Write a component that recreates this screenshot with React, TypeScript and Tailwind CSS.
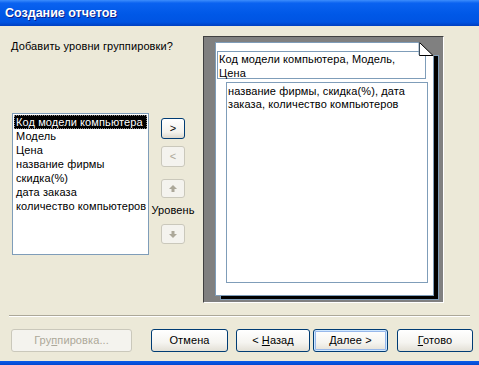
import React from 'react';

const font = "font-['Liberation_Sans',Arial,sans-serif]";

const fields = [
  'Код модели компьютера',
  'Модель',
  'Цена',
  'название фирмы',
  'скидка(%)',
  'дата заказа',
  'количество компьютеров',
];

// small square buttons next to the list
const SmallBtn = ({ disabled, children, h = 'h-[21px]' }: { disabled?: boolean; children: React.ReactNode; h?: string }) => (
  <div
    className={`w-[24px] ${h} flex items-center justify-center rounded-[3px] border text-[11px] ${
      disabled
        ? 'border-[#cac8bb] bg-[#f4f3ee] text-[#aca899]'
        : 'border-[#003c74] bg-[linear-gradient(180deg,#ffffff_0%,#f3f2ed_70%,#dcd8cd_100%)] text-black'
    }`}
  >
    {children}
  </div>
);

const Arrow = ({ down }: { down?: boolean }) => (
  <svg width="8" height="7" viewBox="0 0 8 7" className={down ? 'rotate-180' : ''}>
    <path d="M4 0 L8 4 L5.5 4 L5.5 7 L2.5 7 L2.5 4 L0 4 Z" fill="#aca899" />
  </svg>
);

// XP push buttons at the bottom
const Btn = ({
  w,
  disabled,
  def,
  children,
}: {
  w: string;
  disabled?: boolean;
  def?: boolean;
  children: React.ReactNode;
}) => (
  <div
    className={`${w} h-[23px] flex items-center justify-center rounded-[3px] border text-[11px] ${
      disabled
        ? 'border-[#cac8bb] bg-[#f4f3ee] text-[#aca899]'
        : 'border-[#003c74] bg-[linear-gradient(180deg,#ffffff_0%,#f5f4f0_60%,#e3e0d6_100%)] text-black'
    } ${def ? 'shadow-[inset_0_0_0_1px_#cee7ff,inset_0_0_0_2px_#98b8ea]' : ''}`}
  >
    {children}
  </div>
);

export default function App() {
  return (
    <div className={`w-[479px] h-[365px] bg-[#ece9d8] flex flex-col overflow-hidden tracking-[0.1px] ${font}`}>
      {/* title bar */}
      <div className="h-[26px] shrink-0 flex items-center pl-[5px] bg-[linear-gradient(180deg,#3d8dfc_0%,#0a62f0_12%,#0058e7_55%,#0054e2_85%,#003fc0_100%)]">
        <span className="text-white font-bold text-[12.5px] tracking-[0px] [text-shadow:1px_1px_0_#0a1e8a]">
          Создание отчетов
        </span>
      </div>

      <div className="h-[335px] shrink-0 flex flex-col">
        <div className="flex pt-[10px]">
          {/* left: label + list */}
          <div className="w-[148px] shrink-0 flex flex-col">
            <div className="pl-[11px] mt-[3px] leading-[14px] text-[11px] text-black whitespace-nowrap">
              Добавить уровни группировки?
            </div>
            <div className="ml-[12px] mt-[60px] w-[137px] h-[142px] border border-[#7f9db9] bg-white pt-[1px] px-[1px]">
              {fields.map((f, i) => (
                <div
                  key={f}
                  className={`h-[14px] leading-[14px] pl-[2px] text-[11px] whitespace-nowrap ${
                    i === 0 ? 'bg-black text-white outline outline-1 outline-dotted outline-offset-[-1px] outline-[#888]' : 'text-black'
                  }`}
                >
                  {f}
                </div>
              ))}
            </div>
          </div>

          {/* middle: move buttons */}
          <div className="w-[50px] shrink-0 flex flex-col items-center pt-[82px]">
            <SmallBtn>&gt;</SmallBtn>
            <div className="mt-[7px]">
              <SmallBtn disabled>&lt;</SmallBtn>
            </div>
            <div className="mt-[12px]">
              <SmallBtn disabled h="h-[19px]">
                <Arrow />
              </SmallBtn>
            </div>
            <div className="mt-[5px] text-[11px] leading-[14px] text-black">Уровень</div>
            <div className="mt-[7px]">
              <SmallBtn disabled h="h-[20px]">
                <Arrow down />
              </SmallBtn>
            </div>
          </div>

          {/* right: preview */}
          <div className="ml-[5px] w-[241px] h-[267px] bg-[#808080] border-t border-l border-t-[#404040] border-l-[#404040] border-b border-r border-b-white border-r-white pl-[11px] pt-[5px]">
            <div className="relative w-[219px] h-[254px]">
              <div className="absolute left-[5px] top-[13px] w-[219px] h-[245px] bg-black border border-[#7f9db9]" />
              <div className="relative w-[219px] h-[254px] bg-white border border-[#7f9db9] flex flex-col">
                <div className="ml-[1px] mt-[8px] w-[209px] h-[28px] border border-[#7f9db9] pl-[1px] text-[11px] leading-[14px] text-black whitespace-nowrap">
                  Код модели компьютера, Модель,
                  <br />
                  Цена
                </div>
                <div className="ml-[10px] mt-[3px] w-[202px] h-[201px] border border-[#7f9db9] pl-[1px] pt-[2px] text-[11px] leading-[13px] text-black whitespace-nowrap">
                  название фирмы, скидка(%), дата
                  <br />
                  заказа, количество компьютеров
                </div>
                {/* folded corner */}
                <svg width="16" height="15" viewBox="0 0 16 15" className="absolute -top-[1px] -right-[1px]">
                  <path d="M0 0 L16 0 L16 15 Z" fill="#808080" />
                  <path d="M1.5 0.5 L15 13.5 L1.5 13.5 Z" fill="#fff" stroke="#000" strokeWidth="1" />
                  <path d="M1 0 L1 13" stroke="#7f9db9" strokeWidth="1" />
                </svg>
              </div>
            </div>
          </div>
        </div>

        {/* separator */}
        <div className="mt-[12px] mx-[9px] border-t border-t-[#aca899] border-b border-b-white" />

        {/* buttons */}
        <div className="mt-[12px] ml-[11px] flex">
          <Btn w="w-[121px]" disabled>
            <span>
              Гру<u>п</u>пировка...
            </span>
          </Btn>
          <div className="ml-[19px]">
            <Btn w="w-[77px]">Отмена</Btn>
          </div>
          <div className="ml-[8px]">
            <Btn w="w-[74px]">
              <span>
                &lt; <u>Н</u>азад
              </span>
            </Btn>
          </div>
          <div className="ml-[3px]">
            <Btn w="w-[75px]" def>
              <span>
                <u>Д</u>алее &gt;
              </span>
            </Btn>
          </div>
          <div className="ml-[9px]">
            <Btn w="w-[76px]">
              <span>
                <u>Г</u>отово
              </span>
            </Btn>
          </div>
        </div>
      </div>

      {/* window bottom frame */}
      <div className="h-[4px] shrink-0 bg-[linear-gradient(180deg,#0a5ce8_0%,#0047d0_100%)]" />
    </div>
  );
}
